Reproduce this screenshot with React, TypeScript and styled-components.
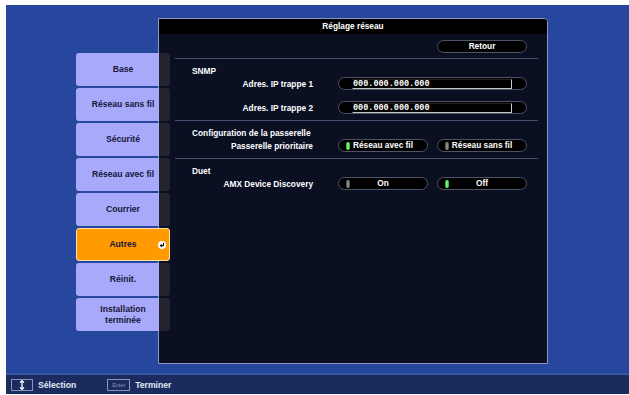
import styled, { createGlobalStyle } from "styled-components";

const GlobalStyle = createGlobalStyle`
  html, body {
    margin: 0;
    padding: 0;
    background: #ffffff;
  }
  body {
    font-family: "Liberation Sans", Arial, sans-serif;
    font-weight: bold;
  }
`;

const Page = styled.div`
  padding: 5px 0 1px 6px;
  width: 629px;
  box-sizing: border-box;
`;

const Screen = styled.div`
  height: 389px;
  background-color: #26479d;
  display: flex;
  flex-direction: column;
`;

const Main = styled.div`
  flex: 1;
  display: flex;
  align-items: flex-start;
  padding: 13px 0 0 70px;
`;

const Sidebar = styled.div`
  position: relative;
  z-index: 1;
  width: 94px;
  margin-top: 35px;
  display: flex;
  flex-direction: column;
  gap: 2px;
`;

const MenuButton = styled.div<{ active?: boolean }>`
  position: relative;
  height: 33px;
  box-sizing: border-box;
  border-radius: 3px;
  display: flex;
  align-items: center;
  justify-content: center;
  text-align: center;
  font-size: 8.6px;
  line-height: 11px;
  color: #161638;
  background: ${(p) =>
    p.active
      ? "#ff9a00"
      : "linear-gradient(to right, #a9a9fb 83px, #23242f 83px)"};
  border: ${(p) => (p.active ? "1px solid #ffe2a8" : "none")};
`;

const EnterBadge = styled.span`
  position: absolute;
  right: 3px;
  top: 12px;
  width: 8px;
  height: 8px;
  border-radius: 50%;
  background: #ffffff;
  display: flex;
  align-items: center;
  justify-content: center;
`;

const Panel = styled.div`
  width: 390px;
  height: 346px;
  margin-left: -12px;
  box-sizing: border-box;
  background-color: #0a0f22;
  border: 1px solid #8c98bb;
  border-top-right-radius: 4px;
  overflow: hidden;
  color: #ffffff;
  font-size: 8.3px;
`;

const TitleBar = styled.div`
  height: 15px;
  line-height: 15px;
  background: #000000;
  text-align: center;
`;

const Body = styled.div`
  padding: 0 9px 0 16px;
`;

const TopRow = styled.div`
  display: flex;
  justify-content: flex-end;
  padding: 6px 11px 5px 0;
`;

const Section = styled.div`
  border-top: 1px solid #4a5170;
  padding: 7px 11px 6px 0;
`;

const SectionTitle = styled.div`
  margin-left: 17px;
  height: 11px;
  line-height: 11px;
`;

const Rows = styled.div`
  display: flex;
  flex-direction: column;
  gap: 11px;
`;

const Row = styled.div`
  display: grid;
  grid-template-columns: 138px 189px;
  column-gap: 25px;
  height: 13px;
  align-items: center;
`;

const Label = styled.div`
  text-align: right;
  white-space: nowrap;
`;

const Choices = styled.div`
  display: grid;
  grid-template-columns: 1fr 1fr;
  gap: 9px;
`;

const Pill = styled.div<{ width?: number }>`
  width: ${(p) => (p.width ? `${p.width}px` : "auto")};
  height: 13px;
  box-sizing: border-box;
  border: 1px solid #4e5366;
  border-radius: 7px;
  background: #000000;
  display: grid;
  grid-template-columns: 12px 1fr 12px;
  align-items: center;
  line-height: 11px;
`;

const PillText = styled.span`
  grid-column: 2;
  text-align: center;
  white-space: nowrap;
`;

const Led = styled.span<{ on?: boolean }>`
  grid-column: 1;
  justify-self: end;
  margin-right: 1px;
  width: 4px;
  height: 8px;
  border-radius: 2px;
  background: ${(p) =>
    p.on
      ? "linear-gradient(to right, #1ea81e, #8aff8a, #1ea81e)"
      : "linear-gradient(to right, #4a4a4a, #9a9a9a, #4a4a4a)"};
`;

const Field = styled.div`
  width: 189px;
  height: 13px;
  box-sizing: border-box;
  border: 1px solid #4e5366;
  border-radius: 7px;
  background: #000000;
  display: flex;
  align-items: center;
  padding-left: 13px;
`;

const FieldBox = styled.div`
  width: 160px;
  height: 10px;
  box-sizing: border-box;
  border: 1px solid #c8c8c8;
  border-left-color: #000;
  border-top-color: #222;
  font-family: "Liberation Mono", "DejaVu Sans Mono", monospace;
  font-weight: bold;
  font-size: 8.5px;
  line-height: 8px;
  color: #ffffff;
  overflow: hidden;
`;

const StatusBar = styled.div`
  height: 19px;
  border-top: 2px solid #3856a8;
  background: #1a2b5e;
  display: flex;
  align-items: center;
  padding-left: 5px;
  color: #e4e8f4;
  font-size: 8.6px;
`;

const KeyBox = styled.span<{ width: number }>`
  width: ${(p) => p.width}px;
  height: 12px;
  box-sizing: border-box;
  border: 1px solid #8a94b8;
  display: flex;
  align-items: center;
  justify-content: center;
  color: #8a94b8;
  font-size: 5.5px;
  font-weight: normal;
`;

const StatusItem = styled.div`
  display: flex;
  align-items: center;
  gap: 5px;
  margin-right: 31px;
`;

const menu = [
  "Base",
  "Réseau sans fil",
  "Sécurité",
  "Réseau avec fil",
  "Courrier",
  "Autres",
  "Réinit.",
  "Installation\nterminée",
];

function Choice({ label, on }: { label: string; on?: boolean }) {
  return (
    <Pill>
      <Led on={on} />
      <PillText>{label}</PillText>
    </Pill>
  );
}

export default function App() {
  return (
    <Page>
      <GlobalStyle />
      <Screen>
        <Main>
          <Sidebar>
            {menu.map((item) => (
              <MenuButton key={item} active={item === "Autres"}>
                <span style={{ whiteSpace: "pre-line" }}>{item}</span>
                {item === "Autres" && (
                  <EnterBadge>
                    <svg width="6" height="6" viewBox="0 0 6 6">
                      <path
                        d="M4.5 0.8 V3.6 H1.6 M2.8 2.3 L1.4 3.6 L2.8 4.9"
                        stroke="#1a1a1a"
                        strokeWidth="1.1"
                        fill="none"
                      />
                    </svg>
                  </EnterBadge>
                )}
              </MenuButton>
            ))}
          </Sidebar>
          <Panel>
            <TitleBar>Réglage réseau</TitleBar>
            <Body>
              <TopRow>
                <Pill width={90}>
                  <PillText>Retour</PillText>
                </Pill>
              </TopRow>
              <Section>
                <SectionTitle>SNMP</SectionTitle>
                <Rows>
                  <Row>
                    <Label>Adres. IP trappe 1</Label>
                    <Field>
                      <FieldBox>000.000.000.000</FieldBox>
                    </Field>
                  </Row>
                  <Row>
                    <Label>Adres. IP trappe 2</Label>
                    <Field>
                      <FieldBox>000.000.000.000</FieldBox>
                    </Field>
                  </Row>
                </Rows>
              </Section>
              <Section>
                <SectionTitle>Configuration de la passerelle</SectionTitle>
                <Row>
                  <Label>Passerelle prioritaire</Label>
                  <Choices>
                    <Choice label="Réseau avec fil" on />
                    <Choice label="Réseau sans fil" />
                  </Choices>
                </Row>
              </Section>
              <Section>
                <SectionTitle>Duet</SectionTitle>
                <Row>
                  <Label>AMX Device Discovery</Label>
                  <Choices>
                    <Choice label="On" />
                    <Choice label="Off" on />
                  </Choices>
                </Row>
              </Section>
            </Body>
          </Panel>
        </Main>
        <StatusBar>
          <StatusItem>
            <KeyBox width={22}>
              <svg width="6" height="10" viewBox="0 0 6 10">
                <path
                  d="M3 1 V9 M1 2.6 L3 0.6 L5 2.6 M1 7.4 L3 9.4 L5 7.4"
                  stroke="#ffffff"
                  strokeWidth="1.3"
                  fill="none"
                />
              </svg>
            </KeyBox>
            <span>Sélection</span>
          </StatusItem>
          <StatusItem>
            <KeyBox width={23}>Enter</KeyBox>
            <span>Terminer</span>
          </StatusItem>
        </StatusBar>
      </Screen>
    </Page>
  );
}
